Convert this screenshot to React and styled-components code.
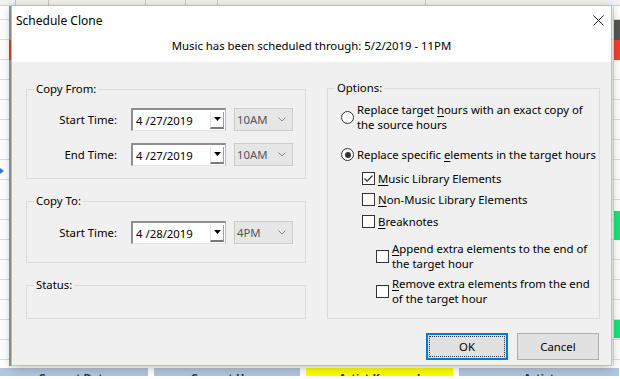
import React from "react";
import styled, { createGlobalStyle } from "styled-components";

const FONT = `"Noto Sans", "Liberation Sans", sans-serif`;

const GlobalStyle = createGlobalStyle`
  html, body {
    margin: 0;
    padding: 0;
    background: #fff;
  }
  body {
    font-family: ${FONT};
    font-size: 11.35px;
    color: #000;
  }
`;

const App = () => {
  return (
    <>
      <GlobalStyle />
      <Screen>
        <Sheet>
          <ColumnHeaders>
            {[10, 21, 64, 26, 21, 138, 183, 39, 15, 18, 23, 42, 20].map((w, i) => (
              <HeaderCell key={i} $width={w} />
            ))}
          </ColumnHeaders>
          <SheetBody>
            <RowGutter>
              <GutterMark $top={34} $color="#e8402a" />
              <RowPointer />
            </RowGutter>
            <Cells />
            <MarkerColumn>
              <Marker $top={14} $height={20} $color="#555" />
              <Marker $top={34} $height={20} $color="#f0402a" />
              <Marker $top={205} $height={29} $color="#1ee07a" />
              <Marker $top={314} $height={18} $color="#1ee07a" />
            </MarkerColumn>
          </SheetBody>
          <FooterBars>
            <FooterBar $width={148}>Current Date</FooterBar>
            <FooterBar $width={146}>Current Hour</FooterBar>
            <FooterBar $width={147} $color="#ffff00">Artist Keyword</FooterBar>
            <FooterBar $width={160}>Artist</FooterBar>
          </FooterBars>
        </Sheet>

        <Window>
          <Header>
            <TitleRow>
              <Title>Schedule Clone</Title>
              <CloseButton>
                <svg width="11" height="11" viewBox="0 0 11 11">
                  <path d="M0.5 0.5 L10.5 10.5 M10.5 0.5 L0.5 10.5" stroke="#222" strokeWidth="1" fill="none" />
                </svg>
              </CloseButton>
            </TitleRow>
            <Message>Music has been scheduled through: 5/2/2019 - 11PM</Message>
          </Header>

          <Body>
            <Columns>
              <LeftColumn>
                <Group $height={90}>
                  <Legend>Copy From:</Legend>
                  <GroupRows $top={18}>
                    <FieldRow>
                      <FieldLabel>Start Time:</FieldLabel>
                      <DatePicker value="4 /27/2019" />
                      <TimeCombo value="10AM" />
                    </FieldRow>
                    <FieldRow>
                      <FieldLabel>End Time:</FieldLabel>
                      <DatePicker value="4 /27/2019" />
                      <TimeCombo value="10AM" />
                    </FieldRow>
                  </GroupRows>
                </Group>

                <Group $height={62}>
                  <Legend>Copy To:</Legend>
                  <GroupRows $top={19}>
                    <FieldRow>
                      <FieldLabel>Start Time:</FieldLabel>
                      <DatePicker value="4 /28/2019" />
                      <TimeCombo value="4PM" />
                    </FieldRow>
                  </GroupRows>
                </Group>

                <Group $height={34}>
                  <Legend>Status:</Legend>
                </Group>
              </LeftColumn>

              <Group $height={231}>
                <Legend>Options:</Legend>
                <OptionList>
                  <OptionItem $indent={13} $top={13}>
                    <RadioDot />
                    <OptionText>
                      Replace target <Key>h</Key>ours with an exact copy of
                      <br />
                      the source hours
                    </OptionText>
                  </OptionItem>
                  <OptionItem $indent={13} $top={15}>
                    <RadioDot $checked />
                    <OptionText>
                      Replace specific <Key>e</Key>lements in the target hours
                    </OptionText>
                  </OptionItem>
                  <OptionItem $indent={34} $top={9}>
                    <CheckBox $checked />
                    <OptionText>
                      <Key>M</Key>usic Library Elements
                    </OptionText>
                  </OptionItem>
                  <OptionItem $indent={34} $top={6}>
                    <CheckBox />
                    <OptionText>
                      <Key>N</Key>on-Music Library Elements
                    </OptionText>
                  </OptionItem>
                  <OptionItem $indent={34} $top={7}>
                    <CheckBox />
                    <OptionText>
                      <Key>B</Key>reaknotes
                    </OptionText>
                  </OptionItem>
                  <OptionItem $indent={48} $top={12}>
                    <CheckBox />
                    <OptionText>
                      <Key>A</Key>ppend extra elements to the end of
                      <br />
                      the target hour
                    </OptionText>
                  </OptionItem>
                  <OptionItem $indent={48} $top={5}>
                    <CheckBox />
                    <OptionText>
                      <Key>R</Key>emove extra elements from the end
                      <br />
                      of the target hour
                    </OptionText>
                  </OptionItem>
                </OptionList>
              </Group>
            </Columns>

            <ButtonBar>
              <DialogButton $default>OK</DialogButton>
              <DialogButton>Cancel</DialogButton>
            </ButtonBar>
          </Body>
        </Window>
      </Screen>
    </>
  );
};

export default App;

const DatePicker = ({ value }) => (
  <StyledDateBox>
    <DateText>{value}</DateText>
    <DropButton>
      <svg width="7" height="4" viewBox="0 0 7 4">
        <path d="M0 0 L7 0 L3.5 4 Z" fill="#000" />
      </svg>
    </DropButton>
  </StyledDateBox>
);

const TimeCombo = ({ value }) => (
  <StyledCombo>
    <ComboText>{value}</ComboText>
    <svg width="8" height="5" viewBox="0 0 8 5">
      <path d="M0.5 0.5 L4 4 L7.5 0.5" stroke="#8a8a8a" strokeWidth="1" fill="none" />
    </svg>
  </StyledCombo>
);

/* background spreadsheet */

const Screen = styled.div`
  position: relative;
  width: 620px;
  height: 379px;
  overflow: hidden;
  background: #fff;
`;

const Sheet = styled.div`
  display: flex;
  flex-direction: column;
  height: 100%;
`;

const ColumnHeaders = styled.div`
  flex: none;
  display: flex;
  height: 5px;
  background: #f2f2f2;
  border-bottom: 1px solid #d4d4d4;
`;

const HeaderCell = styled.div`
  flex: none;
  width: ${(p) => p.$width * 1.5}px;
  border-right: 1px solid #c8c8c8;
`;

const SheetBody = styled.div`
  flex: 1;
  display: flex;
  background-image: repeating-linear-gradient(
    to bottom,
    transparent 0px,
    transparent 19px,
    #dcdcdc 19px,
    #dcdcdc 20px
  );
  background-position: 0 -6px;
`;

const RowGutter = styled.div`
  position: relative;
  flex: none;
  width: 9px;
  border-right: 2px solid #9a9a9a;
`;

const GutterMark = styled.div`
  position: absolute;
  right: -2px;
  top: ${(p) => p.$top}px;
  width: 2px;
  height: 20px;
  background: ${(p) => p.$color};
`;

const RowPointer = styled.div`
  position: absolute;
  left: 0;
  top: 162px;
  width: 0;
  height: 0;
  border-top: 3px solid transparent;
  border-bottom: 3px solid transparent;
  border-left: 4px solid #2a7ad6;
`;

const Cells = styled.div`
  flex: 1;
`;

const MarkerColumn = styled.div`
  position: relative;
  flex: none;
  width: 6px;
  border-left: 1px solid #dcdcdc;
`;

const Marker = styled.div`
  position: absolute;
  left: 0;
  right: 0;
  top: ${(p) => p.$top}px;
  height: ${(p) => p.$height}px;
  background: ${(p) => p.$color};
`;

const FooterBars = styled.div`
  flex: none;
  display: flex;
  gap: 6px;
  height: 8px;
  padding: 2px 0 3px;
`;

const FooterBar = styled.div`
  flex: none;
  width: ${(p) => p.$width}px;
  height: 8px;
  overflow: hidden;
  background: ${(p) => p.$color || "#b3c6de"};
  color: #333;
  font-size: 11px;
  font-weight: bold;
  line-height: 14px;
  padding-top: 3px;
  box-sizing: border-box;
  text-align: center;
`;

/* dialog */

const Window = styled.div`
  position: absolute;
  left: 11px;
  top: 5px;
  width: 601px;
  height: 361px;
  box-sizing: border-box;
  display: flex;
  flex-direction: column;
  background: #f0f0f0;
  border: 1px solid #8fcaf0;
  box-shadow: 0 2px 10px rgba(0, 0, 0, 0.25);
`;

const Header = styled.div`
  flex: none;
  height: 56px;
  background: #fff;
`;

const TitleRow = styled.div`
  display: flex;
  align-items: center;
  height: 28px;
`;

const Title = styled.div`
  flex: 1;
  padding-left: 4px;
  font-size: 12px;
`;

const CloseButton = styled.div`
  flex: none;
  display: flex;
  align-items: center;
  justify-content: center;
  width: 26px;
  height: 26px;
`;

const Message = styled.div`
  margin-top: 4px;
  text-align: center;
  line-height: 16px;
`;

const Body = styled.div`
  flex: 1;
  display: flex;
  flex-direction: column;
  padding: 26px 11px 0 14px;
`;

const Columns = styled.div`
  display: grid;
  grid-template-columns: 280px 273px;
  column-gap: 21px;
  align-items: start;
`;

const LeftColumn = styled.div`
  display: flex;
  flex-direction: column;
  gap: 22px;
  margin-top: 1px;
`;

const Group = styled.div`
  position: relative;
  box-sizing: border-box;
  height: ${(p) => p.$height}px;
  border: 1px solid #dcdcdc;
`;

const Legend = styled.span`
  position: absolute;
  top: -9px;
  left: 7px;
  padding: 0 2px;
  background: #f0f0f0;
  line-height: 16px;
`;

const GroupRows = styled.div`
  display: flex;
  flex-direction: column;
  gap: 12px;
  padding-top: ${(p) => p.$top}px;
`;

const FieldRow = styled.div`
  display: flex;
  align-items: center;
  gap: 8px;
`;

const FieldLabel = styled.div`
  width: 90px;
  margin-right: 6px;
  text-align: right;
`;

const StyledDateBox = styled.div`
  box-sizing: border-box;
  display: flex;
  align-items: center;
  width: 95px;
  height: 23px;
  padding: 0 1px 0 3px;
  background: #fff;
  border-top: 2px solid #8e8e8e;
  border-left: 2px solid #8e8e8e;
  border-right: 1px solid #b9b9b9;
  border-bottom: 1px solid #e6e6e6;
`;

const DateText = styled.span`
  flex: 1;
`;

const DropButton = styled.div`
  box-sizing: border-box;
  display: flex;
  align-items: center;
  justify-content: center;
  width: 14px;
  height: 17px;
  background: #fff;
  border-left: 1px solid #e3e3e3;
  border-right: 1px solid #a0a0a0;
  border-bottom: 2px solid #7a7a7a;
`;

const StyledCombo = styled.div`
  box-sizing: border-box;
  display: flex;
  align-items: center;
  width: 59px;
  height: 23px;
  padding: 0 6px 0 2px;
  background: #e6e6e6;
  border: 1px solid #cccccc;
`;

const ComboText = styled.span`
  flex: 1;
  color: #555;
`;

const OptionList = styled.div`
  display: flex;
  flex-direction: column;
`;

const OptionItem = styled.div`
  display: flex;
  align-items: center;
  gap: 3px;
  margin-top: ${(p) => p.$top}px;
  padding-left: ${(p) => p.$indent}px;
`;

const OptionText = styled.div`
  line-height: 15px;
  white-space: nowrap;
`;

const Key = styled.span`
  text-decoration: underline;
  text-underline-offset: 2px;
`;

const RadioDot = styled.span`
  position: relative;
  flex: none;
  box-sizing: border-box;
  width: 13px;
  height: 13px;
  border: 1px solid #333;
  border-radius: 50%;
  background: #fff;
  &::after {
    content: "";
    display: ${(p) => (p.$checked ? "block" : "none")};
    position: absolute;
    left: 2.5px;
    top: 2.5px;
    width: 6px;
    height: 6px;
    border-radius: 50%;
    background: #333;
  }
`;

const CheckBox = ({ $checked }) => (
  <StyledCheck>
    {$checked && (
      <svg width="11" height="11" viewBox="0 0 11 11">
        <path d="M1.5 5.5 L4.2 8.2 L9.5 2.5" stroke="#333" strokeWidth="1.2" fill="none" />
      </svg>
    )}
  </StyledCheck>
);

const StyledCheck = styled.span`
  flex: none;
  box-sizing: border-box;
  display: flex;
  align-items: center;
  justify-content: center;
  width: 13px;
  height: 13px;
  border: 1px solid #333;
  background: #fff;
`;

const ButtonBar = styled.div`
  display: flex;
  justify-content: flex-end;
  gap: 9px;
  margin-top: 14px;
  padding-right: 1px;
`;

const DialogButton = styled.div`
  position: relative;
  box-sizing: border-box;
  display: flex;
  align-items: center;
  justify-content: center;
  width: 82px;
  height: 27px;
  background: #e1e1e1;
  border: ${(p) => (p.$default ? "2px solid #0078d7" : "1px solid #adadad")};
  &::after {
    content: "";
    display: ${(p) => (p.$default ? "block" : "none")};
    position: absolute;
    inset: 1px;
    border: 1px dotted #333;
  }
`;
